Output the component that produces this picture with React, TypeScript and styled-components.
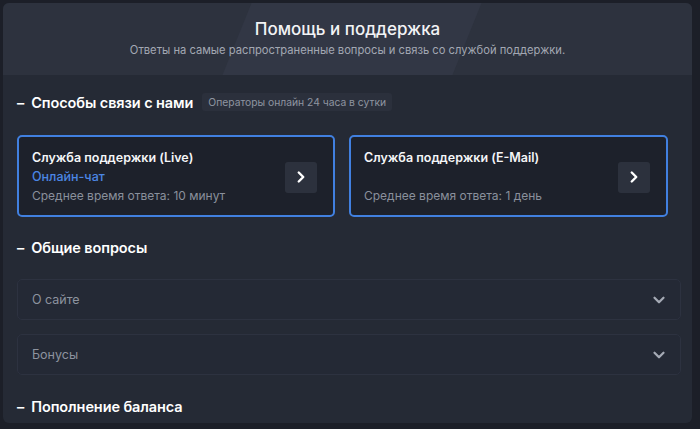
import styled, { createGlobalStyle } from "styled-components";
import { FiChevronRight, FiChevronDown } from "react-icons/fi";

const GlobalStyle = createGlobalStyle`
  html, body {
    margin: 0;
    padding: 0;
    background: #1c1f28;
    font-family: Inter, "Noto Sans", sans-serif;
    color: #fff;
    overflow: hidden;
  }
  * { box-sizing: border-box; }
`

const Page = styled.div`
  height: 429px;
  padding: 3px 8px 6px 3px;
`

const Panel = styled.div`
  height: 100%;
  background: #252a35;
  border-radius: 6px;
  overflow: hidden;
`

const Header = styled.header`
  position: relative;
  height: 72px;
  background: #2d323e;
  display: flex;
  flex-direction: column;
  align-items: center;
  padding-top: 16px;
  gap: 4px;
  overflow: hidden;

  /* diagonal light band */
  &::before {
    content: "";
    position: absolute;
    top: 0;
    bottom: 0;
    left: 234px;
    width: 230px;
    background: #323745;
    transform: skewX(-22deg);
  }
`

const Title = styled.h1`
  position: relative;
  margin: 0;
  font-size: 17px;
  line-height: 21px;
  font-weight: 500;
  color: #f2f3f5;
`

const Subtitle = styled.p`
  position: relative;
  margin: 0;
  font-size: 11.2px;
  line-height: 13px;
  color: #a3a8b3;
`

const Body = styled.div`
  padding: 18px 11px 8px 14px;
  display: flex;
  flex-direction: column;
`

const SectionHead = styled.div<{ $gap?: number }>`
  display: flex;
  align-items: center;
  gap: 9px;
  margin-bottom: ${p => p.$gap ?? 22}px;
`

const SectionTitle = styled.h2`
  margin: 0;
  font-size: 14.5px;
  font-weight: 600;
  color: #fff;
  letter-spacing: -0.1px;
  white-space: pre;
`

const Badge = styled.span`
  background: #2b303c;
  border-radius: 3px;
  padding: 3px 6px;
  font-size: 10.3px;
  color: #8f95a1;
`

const Cards = styled.div`
  display: grid;
  grid-template-columns: 318px 319px;
  gap: 14px;
  margin-bottom: 22px;
`

const Card = styled.div`
  height: 82px;
  border: 2px solid #4180e0;
  border-radius: 5px;
  background: #1d212b;
  display: flex;
  align-items: center;
  justify-content: space-between;
  padding: 2px 16px 0 13px;
`

const CardText = styled.div`
  display: flex;
  flex-direction: column;
  gap: 3px;
`

const CardTitle = styled.div`
  font-size: 12.5px;
  font-weight: 600;
  color: #f4f5f7;
  line-height: 16px;
`

const CardLink = styled.div`
  font-size: 12.5px;
  font-weight: 500;
  color: #4b86e4;
  line-height: 16px;
  min-height: 16px;
`

const CardNote = styled.div`
  font-size: 12px;
  color: #8a909c;
  line-height: 16px;
`

const ArrowButton = styled.button`
  width: 32px;
  height: 31px;
  border: none;
  border-radius: 3px;
  background: #2c313d;
  color: #fff;
  display: flex;
  align-items: center;
  justify-content: center;
  padding: 0;
`

const Accordion = styled.div`
  display: flex;
  flex-direction: column;
  gap: 14px;
  margin-bottom: 23px;
`

const AccItem = styled.div`
  height: 41px;
  border: 1px solid #2d3240;
  border-radius: 5px;
  background: #242935;
  display: flex;
  align-items: center;
  justify-content: space-between;
  padding: 0 12px 0 14px;
  font-size: 12.5px;
  color: #8d939f;
`

const Chevron = styled(FiChevronDown)`
  color: #a4a9b4;
`

const contacts = [
  { title: "Служба поддержки (Live)", link: "Онлайн-чат", note: "Среднее время ответа: 10 минут" },
  { title: "Служба поддержки (E-Mail)", link: "", note: "Среднее время ответа: 1 день" },
]

const questions = ["О сайте", "Бонусы"]

export default function App() {
  return (
    <>
      <GlobalStyle />
      <Page>
        <Panel>
          <Header>
            <Title>Помощь и поддержка</Title>
            <Subtitle>Ответы на самые распространенные вопросы и связь со службой поддержки.</Subtitle>
          </Header>
          <Body>
            <SectionHead $gap={24}>
              <SectionTitle>–  Способы связи с нами</SectionTitle>
              <Badge>Операторы онлайн 24 часа в сутки</Badge>
            </SectionHead>
            <Cards>
              {contacts.map(c => (
                <Card key={c.title}>
                  <CardText>
                    <CardTitle>{c.title}</CardTitle>
                    <CardLink>{c.link}</CardLink>
                    <CardNote>{c.note}</CardNote>
                  </CardText>
                  <ArrowButton>
                    <FiChevronRight size={18} strokeWidth={3.2}/>
                  </ArrowButton>
                </Card>
              ))}
            </Cards>
            <SectionHead $gap={23}>
              <SectionTitle>–  Общие вопросы</SectionTitle>
            </SectionHead>
            <Accordion>
              {questions.map(q => (
                <AccItem key={q}>
                  <span>{q}</span>
                  <Chevron size={18} strokeWidth={3}/>
                </AccItem>
              ))}
            </Accordion>
            <SectionHead>
              <SectionTitle>–  Пополнение баланса</SectionTitle>
            </SectionHead>
          </Body>
        </Panel>
      </Page>
    </>
  );
}
